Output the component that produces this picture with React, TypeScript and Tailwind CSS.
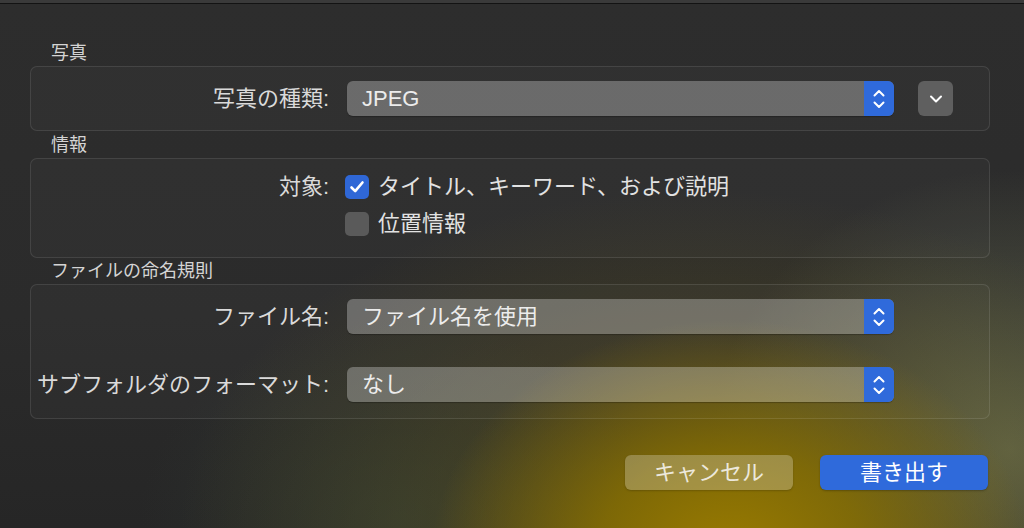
import React from "react";

const font = "font-['Liberation_Sans','Noto_Sans_CJK_JP',sans-serif]";

function UpDown() {
  return (
    <svg width="14" height="22" viewBox="0 0 14 22" fill="none">
      <path d="M2.5 7.5L7 3L11.5 7.5" stroke="white" strokeWidth="2" strokeLinecap="round" strokeLinejoin="round" />
      <path d="M2.5 14.5L7 19L11.5 14.5" stroke="white" strokeWidth="2" strokeLinecap="round" strokeLinejoin="round" />
    </svg>
  );
}

function Popup({ value }: { value: string }) {
  return (
    <div className="flex h-[35px] w-[547px] items-stretch rounded-[6px] bg-white/[0.28] shadow-[0_1px_1px_rgba(0,0,0,0.25)]">
      <div className="flex flex-1 items-center pl-[15px] text-[22px] leading-none text-[#ececec]">{value}</div>
      <div className="flex w-[30px] items-center justify-center rounded-r-[6px] bg-[#2f6adb]">
        <UpDown />
      </div>
    </div>
  );
}

function Label({ children }: { children: React.ReactNode }) {
  return (
    <div className="w-[298px] shrink-0 text-right text-[22px] leading-none text-[#dadada] whitespace-nowrap">{children}</div>
  );
}

function Section({ title, children, className }: { title: string; children: React.ReactNode; className: string }) {
  return (
    <div className="flex flex-col">
      <div className="h-[24px] pl-[21px] text-[18px] leading-[24px] text-[#d4d4d4]">{title}</div>
      <div className={"mt-[1px] rounded-[7px] border border-white/10 bg-white/[0.02] " + className}>{children}</div>
    </div>
  );
}

function Checkbox({ checked }: { checked: boolean }) {
  return checked ? (
    <div className="flex h-[24px] w-[24px] items-center justify-center rounded-[5px] bg-[#2f67d6]">
      <svg width="18" height="18" viewBox="0 0 18 18" fill="none">
        <path d="M3.5 9.5L7.2 13.2L14.5 4.5" stroke="white" strokeWidth="2.6" strokeLinecap="round" strokeLinejoin="round" />
      </svg>
    </div>
  ) : (
    <div className="h-[24px] w-[24px] rounded-[5px] bg-[#5a5a5a]" />
  );
}

export default function App() {
  return (
    <div
      className={
        font +
        " flex h-[528px] w-full flex-col overflow-hidden bg-[#2b2b2b] bg-[radial-gradient(ellipse_300px_240px_at_730px_560px,rgba(155,124,0,1),rgba(138,113,0,0.8)_45%,transparent_100%),radial-gradient(ellipse_520px_330px_at_700px_520px,rgba(125,108,20,0.45),transparent_100%),radial-gradient(ellipse_300px_280px_at_1010px_450px,rgba(105,110,80,0.8),transparent_100%),radial-gradient(ellipse_260px_200px_at_400px_520px,rgba(50,62,54,0.6),transparent_100%),linear-gradient(180deg,#2d2d2d,#2b2b2b_60%,#262626)]"
      }
    >
      <div className="h-[3px] shrink-0 border-b border-[#131313] bg-[#3a3a3a] box-content" />
      <div className="flex flex-col pl-[30px] pr-[34px] pt-[37px]">
        <Section title="写真" className="flex h-[65px] items-center">
          <Label>写真の種類:</Label>
          <div className="ml-[18px]">
            <Popup value="JPEG" />
          </div>
          <div className="ml-[24px] flex h-[35px] w-[35px] items-center justify-center rounded-[6px] bg-[#5f5f5f]">
            <svg width="14" height="10" viewBox="0 0 14 10" fill="none">
              <path d="M2 2.5L7 7.5L12 2.5" stroke="white" strokeWidth="2" strokeLinecap="round" strokeLinejoin="round" />
            </svg>
          </div>
        </Section>
        <div className="h-[2px]" />
        <Section title="情報" className="flex h-[100px] flex-col gap-[13px] pt-[16px]">
          <div className="flex h-[24px] items-center">
            <Label>対象:</Label>
            <div className="ml-[16px]">
              <Checkbox checked />
            </div>
            <div className="ml-[9px] text-[22px] leading-none text-[#e2e2e2]">タイトル、キーワード、および説明</div>
          </div>
          <div className="flex h-[24px] items-center">
            <div className="w-[298px]" />
            <div className="ml-[16px]">
              <Checkbox checked={false} />
            </div>
            <div className="ml-[9px] text-[22px] leading-none text-[#e2e2e2]">位置情報</div>
          </div>
        </Section>
        <div className="h-[1px]" />
        <Section title="ファイルの命名規則" className="flex h-[135px] flex-col gap-[33px] pt-[14px]">
          <div className="flex items-center">
            <Label>ファイル名:</Label>
            <div className="ml-[18px]">
              <Popup value="ファイル名を使用" />
            </div>
          </div>
          <div className="flex items-center">
            <Label>サブフォルダのフォーマット:</Label>
            <div className="ml-[18px]">
              <Popup value="なし" />
            </div>
          </div>
        </Section>
        <div className="mt-[36px] flex justify-end gap-[27px] pr-[2px]">
          <button className="flex h-[35px] w-[168px] items-center justify-center rounded-[6px] bg-white/25 text-[22px] leading-none text-[#ece8dc] shadow-[0_1px_2px_rgba(0,0,0,0.2)]">
            キャンセル
          </button>
          <button className="flex h-[35px] w-[168px] items-center justify-center rounded-[6px] bg-[#2f6adb] text-[22px] leading-none text-white shadow-[0_1px_2px_rgba(0,0,0,0.25)]">
            書き出す
          </button>
        </div>
      </div>
    </div>
  );
}
